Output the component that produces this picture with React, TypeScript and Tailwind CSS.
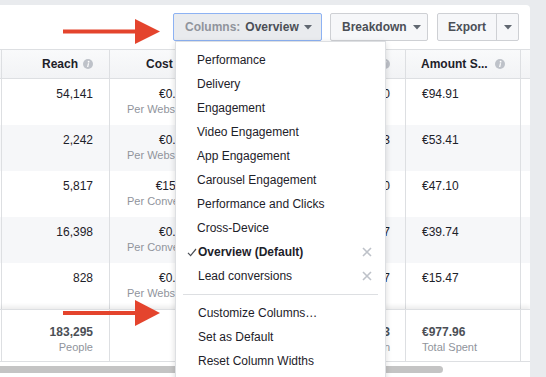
import React from "react";

const Info = () => (
  <svg width="10" height="10" viewBox="0 0 10 10" className="inline-block shrink-0">
    <circle cx="5" cy="5" r="5" fill="#bec2c9" />
    <circle cx="5.6" cy="2.7" r="0.9" fill="#fff" />
    <path d="M4.9 4.3 L6.1 4.3 L5.3 8 L4.1 8 Z" fill="#fff" />
  </svg>
);

const Caret = ({ color = "#4b4f56" }: { color?: string }) => (
  <svg width="8" height="5" viewBox="0 0 8 5" className="inline-block">
    <path d="M0 0 L8 0 L4 4.5 Z" fill={color} />
  </svg>
);

const XIcon = () => (
  <svg width="10" height="10" viewBox="0 0 10 10">
    <path d="M1 1 L9 9 M9 1 L1 9" stroke="#bec2c9" strokeWidth="1.6" />
  </svg>
);

const Check = () => (
  <svg width="10" height="9" viewBox="0 0 10 9">
    <path d="M1 4.8 L3.6 7.6 L9 1" stroke="#4b4f56" strokeWidth="1.2" fill="none" />
  </svg>
);

type Row = {
  reach: string;
  cost: string;
  costSub: string;
  x: string;
  amount: string;
};

const rows: Row[] = [
  { reach: "54,141", cost: "€0.16", costSub: "Per Website Purchase", x: "6,230", amount: "€94.91" },
  { reach: "2,242", cost: "€0.53", costSub: "Per Website Purchase", x: "2,243", amount: "€53.41" },
  { reach: "5,817", cost: "€15.70", costSub: "Per Conversion Event", x: "5,790", amount: "€47.10" },
  { reach: "16,398", cost: "€0.45", costSub: "Per Conversion Event", x: "16,397", amount: "€39.74" },
  { reach: "828", cost: "€0.52", costSub: "Per Website Purchase", x: "847", amount: "€15.47" },
];

const menuItems = [
  "Performance",
  "Delivery",
  "Engagement",
  "Video Engagement",
  "App Engagement",
  "Carousel Engagement",
  "Performance and Clicks",
  "Cross-Device",
];

export default function App() {
  return (
    <div className="relative w-[546px] h-[377px] overflow-hidden bg-[#e9ebee] pt-[5px] font-['Liberation_Sans',Arial,sans-serif] text-[12px] text-[#1d2129]">
      <div className="w-[530px] h-[372px] bg-white rounded-tr-[4px] overflow-hidden flex flex-col">
        {/* toolbar */}
        <div className="h-[44px] flex justify-end items-start pt-[8px] pr-[11px] gap-[8px] shrink-0">
          <div className="h-[28px] w-[149px] flex items-center pl-[11px] gap-[5px] bg-[#e9ebee] border border-[#8db2f3] rounded-[2px] font-bold">
            <span className="text-[#90949c]">Columns:</span>
            <span className="text-[#4b4f56]">Overview</span>
            <Caret color="#606770" />
          </div>
          <div className="h-[28px] w-[98px] flex items-center pl-[11px] gap-[6px] bg-[#f6f7f9] border border-[#ced0d4] rounded-[2px] font-bold text-[#4b4f56]">
            <span>Breakdown</span>
            <Caret color="#606770" />
          </div>
          <div className="h-[28px] w-[82px] ml-[1px] flex bg-[#f6f7f9] border border-[#ced0d4] rounded-[2px] font-bold text-[#4b4f56]">
            <div className="w-[59px] flex items-center justify-center border-r border-[#ced0d4]">Export</div>
            <div className="flex-1 flex items-center justify-center">
              <Caret color="#606770" />
            </div>
          </div>
        </div>

        {/* header */}
        <div className="flex h-[30px] border-y border-[#dddfe2] bg-gradient-to-b from-[#f9fafb] to-[#f2f3f5] font-bold shrink-0">
          <div className="w-[2px] border-r border-[#dddfe2]" />
          <div className="w-[108px] border-r border-[#dddfe2] flex items-center justify-end gap-[5px] pr-[16px]">
            <span>Reach</span>
            <Info />
          </div>
          <div className="w-[151px] border-r border-[#dddfe2] flex items-center">
            <div className="w-[65px] overflow-hidden whitespace-nowrap pl-[36px]">Cost per Result</div>
          </div>
          <div className="w-[145px] border-r border-[#dddfe2] flex items-center justify-end gap-[5px] pr-[15px]">
            <span>Results</span>
            <Info />
          </div>
          <div className="w-[115px] border-r border-[#dddfe2] flex items-center pl-[15px] gap-[7px]">
            <span>Amount S...</span>
            <Info />
          </div>
          <div className="flex-1" />
        </div>

        {/* rows */}
        {rows.map((r, i) => (
          <div key={i} className={`flex h-[46px] shrink-0 ${i % 2 === 1 ? "bg-[#f6f7f9]" : "bg-white"}`}>
            <div className="w-[2px] border-r border-[#dddfe2]" />
            <div className="w-[108px] border-r border-[#dddfe2] pt-[8px] pr-[16px] text-right leading-[14px]">{r.reach}</div>
            <div className="w-[151px] border-r border-[#dddfe2] pt-[8px] leading-[14px] whitespace-nowrap">
              <div className="w-[65px] overflow-hidden">
                <div className="w-[128px] text-center">{r.cost}</div>
                <div className="pl-[17px] mt-[1px] text-[11px] text-[#90949c] leading-[15px]">{r.costSub}</div>
              </div>
            </div>
            <div className="w-[145px] border-r border-[#dddfe2] pt-[8px] pr-[15px] text-right leading-[14px]">{r.x}</div>
            <div className="w-[115px] border-r border-[#dddfe2] pt-[8px] pl-[16px] leading-[14px]">{r.amount}</div>
            <div className="flex-1" />
          </div>
        ))}

        {/* footer */}
        <div className="flex h-[53px] shrink-0 border-y border-[#dddfe2] bg-white shadow-[0_-3px_4px_rgba(0,0,0,0.07)] relative">
          <div className="w-[2px] border-r border-[#dddfe2]" />
          <div className="w-[108px] border-r border-[#dddfe2] pt-[15px] pr-[16px] text-right">
            <div className="font-bold leading-[14px] text-[#4b4f56]">183,295</div>
            <div className="text-[11px] text-[#90949c] leading-[15px] mt-[1px]">People</div>
          </div>
          <div className="w-[151px] border-r border-[#dddfe2]" />
          <div className="w-[145px] border-r border-[#dddfe2] pt-[15px] pr-[15px] text-right">
            <div className="font-bold leading-[14px] text-[#4b4f56]">1,343</div>
            <div className="text-[11px] text-[#90949c] leading-[15px] mt-[1px]">Per Action</div>
          </div>
          <div className="w-[115px] border-r border-[#dddfe2] pt-[15px] pl-[16px]">
            <div className="font-bold leading-[14px] text-[#4b4f56]">€977.96</div>
            <div className="text-[11px] text-[#90949c] leading-[15px] mt-[1px]">Total Spent</div>
          </div>
          <div className="flex-1" />
        </div>

        {/* scrollbar */}
        <div className="h-[16px] pt-[4px] shrink-0 bg-white">
          <div className="w-[443px] h-[7px] rounded-r-full bg-[#c4c4c4]" />
        </div>
      </div>

      {/* dropdown menu */}
      <div className="absolute left-[175px] top-[41px] w-[211px] h-[340px] bg-white border border-[#dddfe2] shadow-[0_2px_6px_rgba(0,0,0,0.15)] py-[6px] text-[#1d2129]">
        {menuItems.map((m) => (
          <div key={m} className="h-[24px] flex items-center pl-[21px]">{m}</div>
        ))}
        <div className="h-[24px] flex items-center pl-[11px] pr-[13px]">
          <div className="w-[11px]"><Check /></div>
          <span className="font-bold flex-1">Overview (Default)</span>
          <XIcon />
        </div>
        <div className="h-[24px] flex items-center pl-[22px] pr-[13px]">
          <span className="flex-1">Lead conversions</span>
          <XIcon />
        </div>
        <div className="my-[6px] mx-[7px] h-px bg-[#dddfe2]" />
        <div className="h-[24px] flex items-center pl-[22px]">Customize Columns…</div>
        <div className="h-[24px] flex items-center pl-[22px]">Set as Default</div>
        <div className="h-[24px] flex items-center pl-[22px]">Reset Column Widths</div>
      </div>

      {/* annotation arrows */}
      <svg className="absolute left-0 top-0" width="546" height="377" viewBox="0 0 546 377">
        <rect x="63" y="29.5" width="75" height="4" fill="#e4442d" />
        <polygon points="135,19 160,31.5 135,44" fill="#e4442d" />
        <rect x="63" y="311" width="75" height="4" fill="#e4442d" />
        <polygon points="135,300 160,313 135,326" fill="#e4442d" />
      </svg>
    </div>
  );
}
